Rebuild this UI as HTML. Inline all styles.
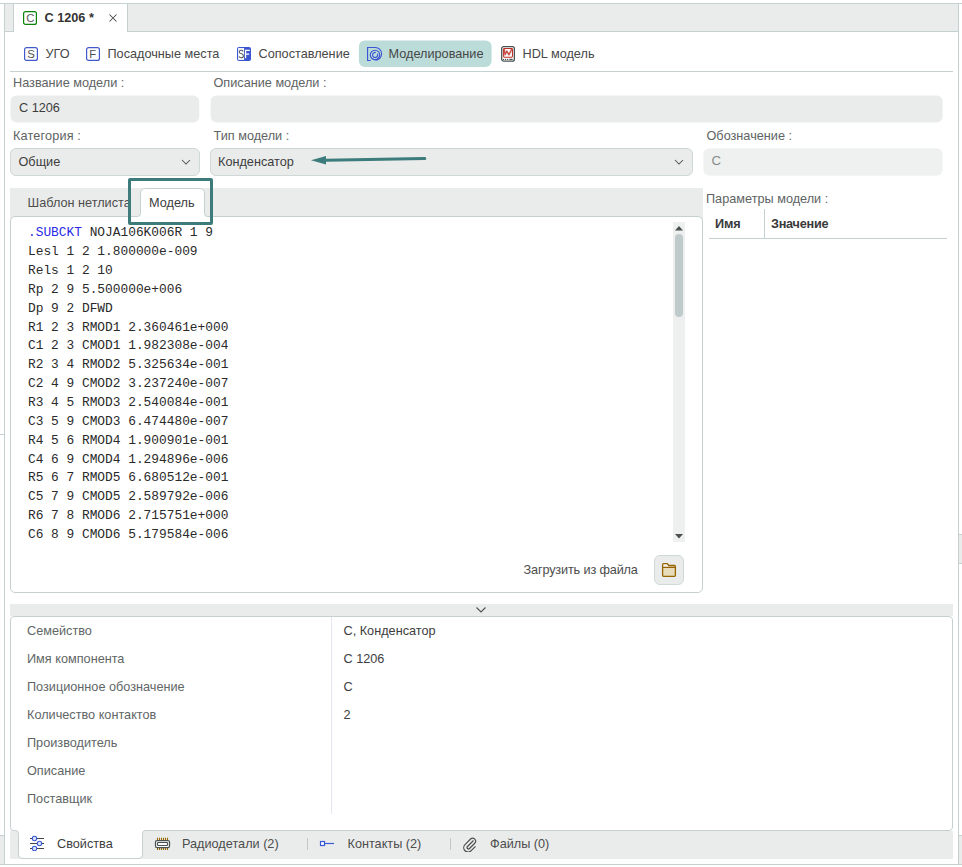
<!DOCTYPE html>
<html><head><meta charset="utf-8"><style>
html,body{margin:0;padding:0;background:#fff;width:962px;height:867px;overflow:hidden;position:relative}
body>div,body>svg{position:absolute;box-sizing:border-box}
.t{white-space:nowrap;font-family:"Liberation Sans",sans-serif}
</style></head><body>
<div style="left:0px;top:3px;width:962px;height:1px;background:#c5d1d1"></div>
<div style="left:4px;top:3px;width:1px;height:862px;background:#c5d1d1"></div>
<div style="left:958px;top:3px;width:1px;height:862px;background:#c5d1d1"></div>
<div style="left:0px;top:864px;width:962px;height:1px;background:#c5d1d1"></div>
<div style="left:0px;top:835px;width:4px;height:29px;background:#eaeceb;border-top:1px solid #c5d1d1"></div>
<div style="left:959px;top:835px;width:3px;height:29px;background:#eaeceb;border-top:1px solid #c5d1d1"></div>
<div style="left:959px;top:534px;width:3px;height:30px;background:#eaeceb;border-top:1px solid #c5d1d1;border-bottom:1px solid #c5d1d1"></div>
<div style="left:0px;top:434px;width:4px;height:1px;background:#c5d1d1"></div>
<div style="left:5px;top:4px;width:8px;height:27px;background:#eaeceb"></div>
<div style="left:13px;top:3px;width:1px;height:29px;background:#c5d1d1"></div>
<div style="left:5px;top:31px;width:8px;height:1px;background:#c5d1d1"></div>
<div style="left:127px;top:4px;width:831px;height:27px;background:#eaeceb"></div>
<div style="left:127px;top:3px;width:1px;height:29px;background:#c5d1d1"></div>
<div style="left:127px;top:31px;width:831px;height:1px;background:#c5d1d1"></div>
<svg style="left:23px;top:11px" width="14" height="14"><rect x="0.6" y="0.6" width="12.8" height="12.8" rx="2" fill="#fff" stroke="#0a820a" stroke-width="1.2"/></svg>
<div class="t" style="left:26.2px;top:13.02px;font-size:11.4px;line-height:11.4px;color:#5a5a5a;font-weight:normal;">C</div>
<div class="t" style="left:44.5px;top:12.00px;font-size:12.7px;line-height:12.7px;color:#343434;font-weight:bold;">С 1206 *</div>
<svg style="left:108px;top:13px" width="10" height="10"><path d="M1.5 1.5L8.5 8.5M8.5 1.5L1.5 8.5" stroke="#4a4a4a" stroke-width="1.05"/></svg>
<svg style="left:24px;top:47px" width="14" height="14"><rect x="0.6" y="0.6" width="12.8" height="12.8" rx="2" fill="#fff" stroke="#4259c9" stroke-width="1.2"/></svg>
<div class="t" style="left:27.2px;top:49.02px;font-size:11.4px;line-height:11.4px;color:#505050;font-weight:normal;">S</div>
<div class="t" style="left:45.5px;top:48.00px;font-size:12.7px;line-height:12.7px;color:#474747;font-weight:normal;">УГО</div>
<svg style="left:86px;top:47px" width="14" height="14"><rect x="0.6" y="0.6" width="12.8" height="12.8" rx="2" fill="#fff" stroke="#4259c9" stroke-width="1.2"/></svg>
<div class="t" style="left:89.2px;top:49.02px;font-size:11.4px;line-height:11.4px;color:#505050;font-weight:normal;">F</div>
<div class="t" style="left:107.5px;top:48.00px;font-size:12.7px;line-height:12.7px;color:#474747;font-weight:normal;">Посадочные места</div>
<svg style="left:237px;top:47px" width="14" height="14"><rect x="0" y="0" width="14" height="14" rx="2" fill="#3b55d0"/><rect x="1.1" y="1.1" width="6" height="11.8" fill="#fff"/><path d="M6.2 4.4Q5.6 3.3 4.1 3.3Q2.3 3.3 2.3 4.9Q2.3 6.1 4.2 6.6Q6.4 7.1 6.4 8.9Q6.4 10.8 4.2 10.8Q2.5 10.8 1.9 9.4" fill="none" stroke="#505555" stroke-width="1.05"/><path d="M8.6 11.2V3.4H12.8M8.6 7.2H12.2" fill="none" stroke="#fff" stroke-width="1.2"/></svg>
<div class="t" style="left:258.5px;top:48.00px;font-size:12.7px;line-height:12.7px;color:#474747;font-weight:normal;">Сопоставление</div>
<svg style="left:358px;top:40px" width="135" height="28"><rect x="0.9" y="0.4" width="132.7" height="26.6" rx="6" fill="#bbdcd9"/></svg>
<svg style="left:366px;top:46px" width="17" height="16" fill="none" stroke="#3d55d2" stroke-width="1.15"><path d="M4.7 14.5H1.55V1.5H9.3A6.3 6.3 0 0 1 9.3 14.1"/><circle cx="9" cy="8.95" r="4.7"/><path d="M11.36 7.68A2.55 2.55 0 1 1 9.81 6.49"/></svg>
<div class="t" style="left:388.5px;top:48.00px;font-size:12.7px;line-height:12.7px;color:#474747;font-weight:normal;">Моделирование</div>
<svg style="left:501px;top:46px" width="15" height="16"><rect x="0.7" y="0.7" width="12.65" height="14.45" rx="2" fill="#fff" stroke="#4a5252" stroke-width="1.3"/><rect x="2.6" y="2.55" width="8.85" height="8.6" rx="0.8" fill="#fff" stroke="#bf2f2a" stroke-width="1.05"/><path d="M3.3 3.4L4.1 8.7L5.9 5.1L7.9 8.8L9.75 5.1L10.5 3.4" stroke="#c2403a" stroke-width="1.5" fill="none" stroke-linejoin="round" stroke-linecap="round" opacity="0.9"/><circle cx="2.6" cy="13.4" r="0.65" fill="#4a5252"/><circle cx="4.6" cy="13.4" r="0.65" fill="#4a5252"/><circle cx="6.6" cy="13.4" r="0.65" fill="#4a5252"/><path d="M8.3 13.4H11.6" stroke="#4a5252" stroke-width="1.2"/></svg>
<div class="t" style="left:522.5px;top:48.00px;font-size:12.7px;line-height:12.7px;color:#474747;font-weight:normal;">HDL модель</div>
<div style="left:10px;top:71px;width:943px;height:1px;background:#c5d1d1"></div>
<div class="t" style="left:13px;top:77.00px;font-size:12.7px;line-height:12.7px;color:#5e6363;font-weight:normal;">Название модели :</div>
<div class="t" style="left:213.5px;top:77.00px;font-size:12.7px;line-height:12.7px;color:#5e6363;font-weight:normal;">Описание модели :</div>
<svg style="left:10px;top:95px" width="934" height="29"><rect x="0.5" y="0.4" width="188.8" height="27" rx="6" fill="#eaeceb"/><rect x="200.6" y="0.4" width="732" height="27" rx="6" fill="#eaeceb"/></svg>
<div class="t" style="left:19px;top:102.00px;font-size:12.7px;line-height:12.7px;color:#3d3d3d;font-weight:normal;">С 1206</div>
<div class="t" style="left:13px;top:130.00px;font-size:12.7px;line-height:12.7px;color:#5e6363;font-weight:normal;letter-spacing:0.15px">Категория :</div>
<div class="t" style="left:213.5px;top:130.00px;font-size:12.7px;line-height:12.7px;color:#5e6363;font-weight:normal;">Тип модели :</div>
<div class="t" style="left:706.5px;top:130.00px;font-size:12.7px;line-height:12.7px;color:#5e6363;font-weight:normal;">Обозначение :</div>
<div style="left:10px;top:148px;width:190px;height:28px;background:#eaeceb;border:1px solid #cfd8d8;border-radius:6px"></div>
<div class="t" style="left:18.5px;top:156.00px;font-size:12.7px;line-height:12.7px;color:#3d3d3d;font-weight:normal;">Общие</div>
<svg style="left:181px;top:158px" width="10" height="8"><path d="M1 2L5 6L9 2" stroke="#4f5454" stroke-width="1.05" fill="none"/></svg>
<div style="left:210px;top:148px;width:483px;height:28px;background:#eaeceb;border:1px solid #cfd8d8;border-radius:6px"></div>
<div class="t" style="left:218px;top:156.00px;font-size:12.7px;line-height:12.7px;color:#3d3d3d;font-weight:normal;">Конденсатор</div>
<svg style="left:674px;top:158px" width="10" height="8"><path d="M1 2L5 6L9 2" stroke="#4f5454" stroke-width="1.05" fill="none"/></svg>
<svg style="left:703px;top:148px" width="241" height="29"><rect x="0.3" y="0.3" width="239.3" height="27.4" rx="6" fill="#eff1f0"/></svg>
<div class="t" style="left:711.5px;top:155.00px;font-size:12.7px;line-height:12.7px;color:#858b8b;font-weight:normal;font-size:13.2px">С</div>
<svg style="left:300px;top:148px" width="140" height="24"><path d="M26 12.2L124.8 10.5" stroke="#3d7c7c" stroke-width="3" stroke-linecap="round"/><path d="M11 12.3L26 7.9L26 16.6Z" fill="#3d7c7c"/></svg>
<div style="left:10px;top:188px;width:693px;height:32px;background:#eaeceb"></div>
<div class="t" style="left:27.5px;top:197.00px;font-size:12.7px;line-height:12.7px;color:#4d4d4d;font-weight:normal;">Шаблон нетлиста</div>
<div style="left:10px;top:216px;width:693px;height:377px;background:#fff;border:1px solid #c5d1d1;border-radius:5px"></div>
<svg style="left:134px;top:188px" width="78" height="31"><path d="M0 28.5H3.5Q6.5 28.5 6.5 25.5V5.5Q6.5 0.5 11.5 0.5H65.5Q70.5 0.5 70.5 5.5V25.5Q70.5 28.5 73.5 28.5H78V30H0Z" fill="#fff"/><path d="M0 28.5H3.5Q6.5 28.5 6.5 25.5V5.5Q6.5 0.5 11.5 0.5H65.5Q70.5 0.5 70.5 5.5V25.5Q70.5 28.5 73.5 28.5H78" fill="none" stroke="#c5d1d1"/></svg>
<div class="t" style="left:149px;top:197.00px;font-size:12.7px;line-height:12.7px;color:#3d3d3d;font-weight:normal;">Модель</div>
<div style="left:128px;top:178px;width:85px;height:47px;border:3px solid #3e7c7c;border-radius:2px"></div>
<div class="t" style="left:28px;top:227.30px;font-family:'Liberation Mono',monospace;font-size:12.85px;line-height:12.85px;color:#2a2a2a;white-space:pre"><span style="color:#2a2ae6">.SUBCKT</span> NOJA106K006R 1 9</div>
<div class="t" style="left:28px;top:246.15px;font-family:'Liberation Mono',monospace;font-size:12.85px;line-height:12.85px;color:#2a2a2a;white-space:pre">Lesl 1 2 1.800000e-009</div>
<div class="t" style="left:28px;top:265.00px;font-family:'Liberation Mono',monospace;font-size:12.85px;line-height:12.85px;color:#2a2a2a;white-space:pre">Rels 1 2 10</div>
<div class="t" style="left:28px;top:283.85px;font-family:'Liberation Mono',monospace;font-size:12.85px;line-height:12.85px;color:#2a2a2a;white-space:pre">Rp 2 9 5.500000e+006</div>
<div class="t" style="left:28px;top:302.70px;font-family:'Liberation Mono',monospace;font-size:12.85px;line-height:12.85px;color:#2a2a2a;white-space:pre">Dp 9 2 DFWD</div>
<div class="t" style="left:28px;top:321.55px;font-family:'Liberation Mono',monospace;font-size:12.85px;line-height:12.85px;color:#2a2a2a;white-space:pre">R1 2 3 RMOD1 2.360461e+000</div>
<div class="t" style="left:28px;top:340.40px;font-family:'Liberation Mono',monospace;font-size:12.85px;line-height:12.85px;color:#2a2a2a;white-space:pre">C1 2 3 CMOD1 1.982308e-004</div>
<div class="t" style="left:28px;top:359.25px;font-family:'Liberation Mono',monospace;font-size:12.85px;line-height:12.85px;color:#2a2a2a;white-space:pre">R2 3 4 RMOD2 5.325634e-001</div>
<div class="t" style="left:28px;top:378.10px;font-family:'Liberation Mono',monospace;font-size:12.85px;line-height:12.85px;color:#2a2a2a;white-space:pre">C2 4 9 CMOD2 3.237240e-007</div>
<div class="t" style="left:28px;top:396.95px;font-family:'Liberation Mono',monospace;font-size:12.85px;line-height:12.85px;color:#2a2a2a;white-space:pre">R3 4 5 RMOD3 2.540084e-001</div>
<div class="t" style="left:28px;top:415.80px;font-family:'Liberation Mono',monospace;font-size:12.85px;line-height:12.85px;color:#2a2a2a;white-space:pre">C3 5 9 CMOD3 6.474480e-007</div>
<div class="t" style="left:28px;top:434.65px;font-family:'Liberation Mono',monospace;font-size:12.85px;line-height:12.85px;color:#2a2a2a;white-space:pre">R4 5 6 RMOD4 1.900901e-001</div>
<div class="t" style="left:28px;top:453.50px;font-family:'Liberation Mono',monospace;font-size:12.85px;line-height:12.85px;color:#2a2a2a;white-space:pre">C4 6 9 CMOD4 1.294896e-006</div>
<div class="t" style="left:28px;top:472.35px;font-family:'Liberation Mono',monospace;font-size:12.85px;line-height:12.85px;color:#2a2a2a;white-space:pre">R5 6 7 RMOD5 6.680512e-001</div>
<div class="t" style="left:28px;top:491.20px;font-family:'Liberation Mono',monospace;font-size:12.85px;line-height:12.85px;color:#2a2a2a;white-space:pre">C5 7 9 CMOD5 2.589792e-006</div>
<div class="t" style="left:28px;top:510.05px;font-family:'Liberation Mono',monospace;font-size:12.85px;line-height:12.85px;color:#2a2a2a;white-space:pre">R6 7 8 RMOD6 2.715751e+000</div>
<div class="t" style="left:28px;top:528.90px;font-family:'Liberation Mono',monospace;font-size:12.85px;line-height:12.85px;color:#2a2a2a;white-space:pre">C6 8 9 CMOD6 5.179584e-006</div>
<div style="left:673px;top:222px;width:12px;height:320px;background:#eef0ef"></div>
<svg style="left:673px;top:222px" width="12" height="320"><path d="M2 8.5L6 4L10 8.5Z" fill="#4a5050"/><path d="M2 312L6 316.5L10 312Z" fill="#4a5050"/></svg>
<div style="left:675px;top:234px;width:8px;height:83px;background:#bfcaca;border-radius:4px"></div>
<div class="t" style="left:523.5px;top:563.80px;font-size:12.7px;line-height:12.7px;color:#4d4d4d;font-weight:normal;letter-spacing:-0.15px">Загрузить из файла</div>
<div style="left:654px;top:555px;width:30px;height:30px;background:#eaeceb;border:1px solid #cfd9d9;border-radius:6px"></div>
<svg style="left:661px;top:562px" width="16" height="16"><path d="M1.6 5.3H14.4V13.3Q14.4 14.3 13.4 14.3H2.6Q1.6 14.3 1.6 13.3Z" fill="#e6dcb9"/><path d="M1.6 5.3V2.6Q1.6 1.6 2.6 1.6H6.3L7.7 3.5H13.4Q14.4 3.5 14.4 4.5V5.3Z" fill="#f6f6fa"/><path d="M1.6 13.3V2.6Q1.6 1.6 2.6 1.6H6.3L7.7 3.5H13.4Q14.4 3.5 14.4 4.5V13.3Q14.4 14.3 13.4 14.3H2.6Q1.6 14.3 1.6 13.3ZM1.6 5.3H14.4" fill="none" stroke="#976500" stroke-width="1.3" stroke-linejoin="round"/></svg>
<div class="t" style="left:706px;top:193.00px;font-size:12.7px;line-height:12.7px;color:#5e6363;font-weight:normal;">Параметры модели :</div>
<div class="t" style="left:715px;top:218.00px;font-size:12.7px;line-height:12.7px;color:#3a3a3a;font-weight:bold;letter-spacing:-0.15px">Имя</div>
<div class="t" style="left:771px;top:218.00px;font-size:12.7px;line-height:12.7px;color:#3a3a3a;font-weight:bold;letter-spacing:-0.25px">Значение</div>
<div style="left:764px;top:209px;width:1px;height:29px;background:#c5d1d1"></div>
<div style="left:709px;top:238px;width:238px;height:1px;background:#c5d1d1"></div>
<div style="left:10px;top:604px;width:943px;height:12px;background:#eaeceb"></div>
<svg style="left:474px;top:605px" width="14" height="10"><path d="M2.5 2.5L7 7L11.5 2.5" stroke="#4f5454" stroke-width="1.15" fill="none"/></svg>
<div style="left:10px;top:616px;width:943px;height:215px;background:#fff;border:1px solid #c5d1d1;border-radius:4px"></div>
<div style="left:331px;top:617px;width:1px;height:197px;background:#e6e6ee"></div>
<div class="t" style="left:27px;top:625.00px;font-size:12.7px;line-height:12.7px;color:#616666;font-weight:normal;">Семейство</div>
<div class="t" style="left:343.5px;top:625.00px;font-size:12.7px;line-height:12.7px;color:#3d3d3d;font-weight:normal;">С, Конденсатор</div>
<div class="t" style="left:27px;top:653.00px;font-size:12.7px;line-height:12.7px;color:#616666;font-weight:normal;">Имя компонента</div>
<div class="t" style="left:343.5px;top:653.00px;font-size:12.7px;line-height:12.7px;color:#3d3d3d;font-weight:normal;">С 1206</div>
<div class="t" style="left:27px;top:681.00px;font-size:12.7px;line-height:12.7px;color:#616666;font-weight:normal;">Позиционное обозначение</div>
<div class="t" style="left:343.5px;top:681.00px;font-size:12.7px;line-height:12.7px;color:#3d3d3d;font-weight:normal;">С</div>
<div class="t" style="left:27px;top:709.00px;font-size:12.7px;line-height:12.7px;color:#616666;font-weight:normal;">Количество контактов</div>
<div class="t" style="left:343.5px;top:709.00px;font-size:12.7px;line-height:12.7px;color:#3d3d3d;font-weight:normal;">2</div>
<div class="t" style="left:27px;top:737.00px;font-size:12.7px;line-height:12.7px;color:#616666;font-weight:normal;">Производитель</div>
<div class="t" style="left:27px;top:765.00px;font-size:12.7px;line-height:12.7px;color:#616666;font-weight:normal;">Описание</div>
<div class="t" style="left:27px;top:793.00px;font-size:12.7px;line-height:12.7px;color:#616666;font-weight:normal;">Поставщик</div>
<div style="left:10px;top:831px;width:943px;height:28px;background:#eaeceb"></div>
<svg style="left:9px;top:820px" width="150" height="42"><path d="M1.5 0V7.5Q1.5 10.5 4.5 10.5H6.5Q9.5 10.5 9.5 13.5V34Q9.5 38.5 14 38.5H129Q133.5 38.5 133.5 34V13.5Q133.5 10.5 136.5 10.5H150V0Z" fill="#fff"/><path d="M1.5 0V7.5Q1.5 10.5 4.5 10.5H6.5Q9.5 10.5 9.5 13.5V34Q9.5 38.5 14 38.5H129Q133.5 38.5 133.5 34V13.5Q133.5 10.5 136.5 10.5H150" fill="none" stroke="#c5d1d1"/></svg>
<svg style="left:29px;top:835px" width="16" height="16" fill="none"><path d="M1 3.5H15M1 8.5H15M1 13.5H15" stroke="#444" stroke-width="1.2"/><circle cx="5.5" cy="3.5" r="2.2" fill="#dde3f8" stroke="#3b5bd6" stroke-width="1.1"/><circle cx="10.5" cy="8.5" r="2.2" fill="#dde3f8" stroke="#3b5bd6" stroke-width="1.1"/><circle cx="5.5" cy="13.5" r="2.2" fill="#dde3f8" stroke="#3b5bd6" stroke-width="1.1"/></svg>
<div class="t" style="left:57px;top:838.00px;font-size:12.7px;line-height:12.7px;color:#3d3d3d;font-weight:normal;">Свойства</div>
<svg style="left:154px;top:837px" width="17" height="14"><path d="M3.5 0.8V3M5.5 0.8V3M7.5 0.8V3M9.5 0.8V3M11.5 0.8V3M13.5 0.8V3M3.5 10.9V13M5.5 10.9V13M7.5 10.9V13M9.5 10.9V13M11.5 10.9V13M13.5 10.9V13" stroke="#9a6a00" stroke-width="1.1"/><rect x="1.5" y="3.5" width="14" height="7" rx="1.6" fill="#fff" stroke="#4a5252" stroke-width="1.25"/><rect x="3.5" y="5.5" width="10" height="3" rx="0.8" fill="#fff" stroke="#4a5252" stroke-width="1.2"/></svg>
<div class="t" style="left:182px;top:838.00px;font-size:12.7px;line-height:12.7px;color:#4d4d4d;font-weight:normal;">Радиодетали (2)</div>
<div style="left:307px;top:838px;width:1px;height:12px;background:#c0c8c8"></div>
<svg style="left:319px;top:840px" width="16" height="8"><rect x="1.5" y="1.5" width="4" height="4" fill="#fff" stroke="#3b5bd6" stroke-width="1.2"/><path d="M5.5 3.5H15" stroke="#3b5bd6" stroke-width="1.2"/></svg>
<div class="t" style="left:347.5px;top:838.00px;font-size:12.7px;line-height:12.7px;color:#4d4d4d;font-weight:normal;">Контакты (2)</div>
<div style="left:450px;top:838px;width:1px;height:12px;background:#c0c8c8"></div>
<svg style="left:462px;top:836px" width="16" height="16" fill="none"><path d="M11.5 4.5L5.5 10.5A1.4 1.4 0 0 0 7.5 12.5L13 7A3 3 0 0 0 8.8 2.8L3 8.6A4.3 4.3 0 0 0 9.2 14.7L13.5 10.4" stroke="#4a5050" stroke-width="1.2"/></svg>
<div class="t" style="left:490px;top:838.00px;font-size:12.7px;line-height:12.7px;color:#4d4d4d;font-weight:normal;">Файлы (0)</div>
</body></html>
